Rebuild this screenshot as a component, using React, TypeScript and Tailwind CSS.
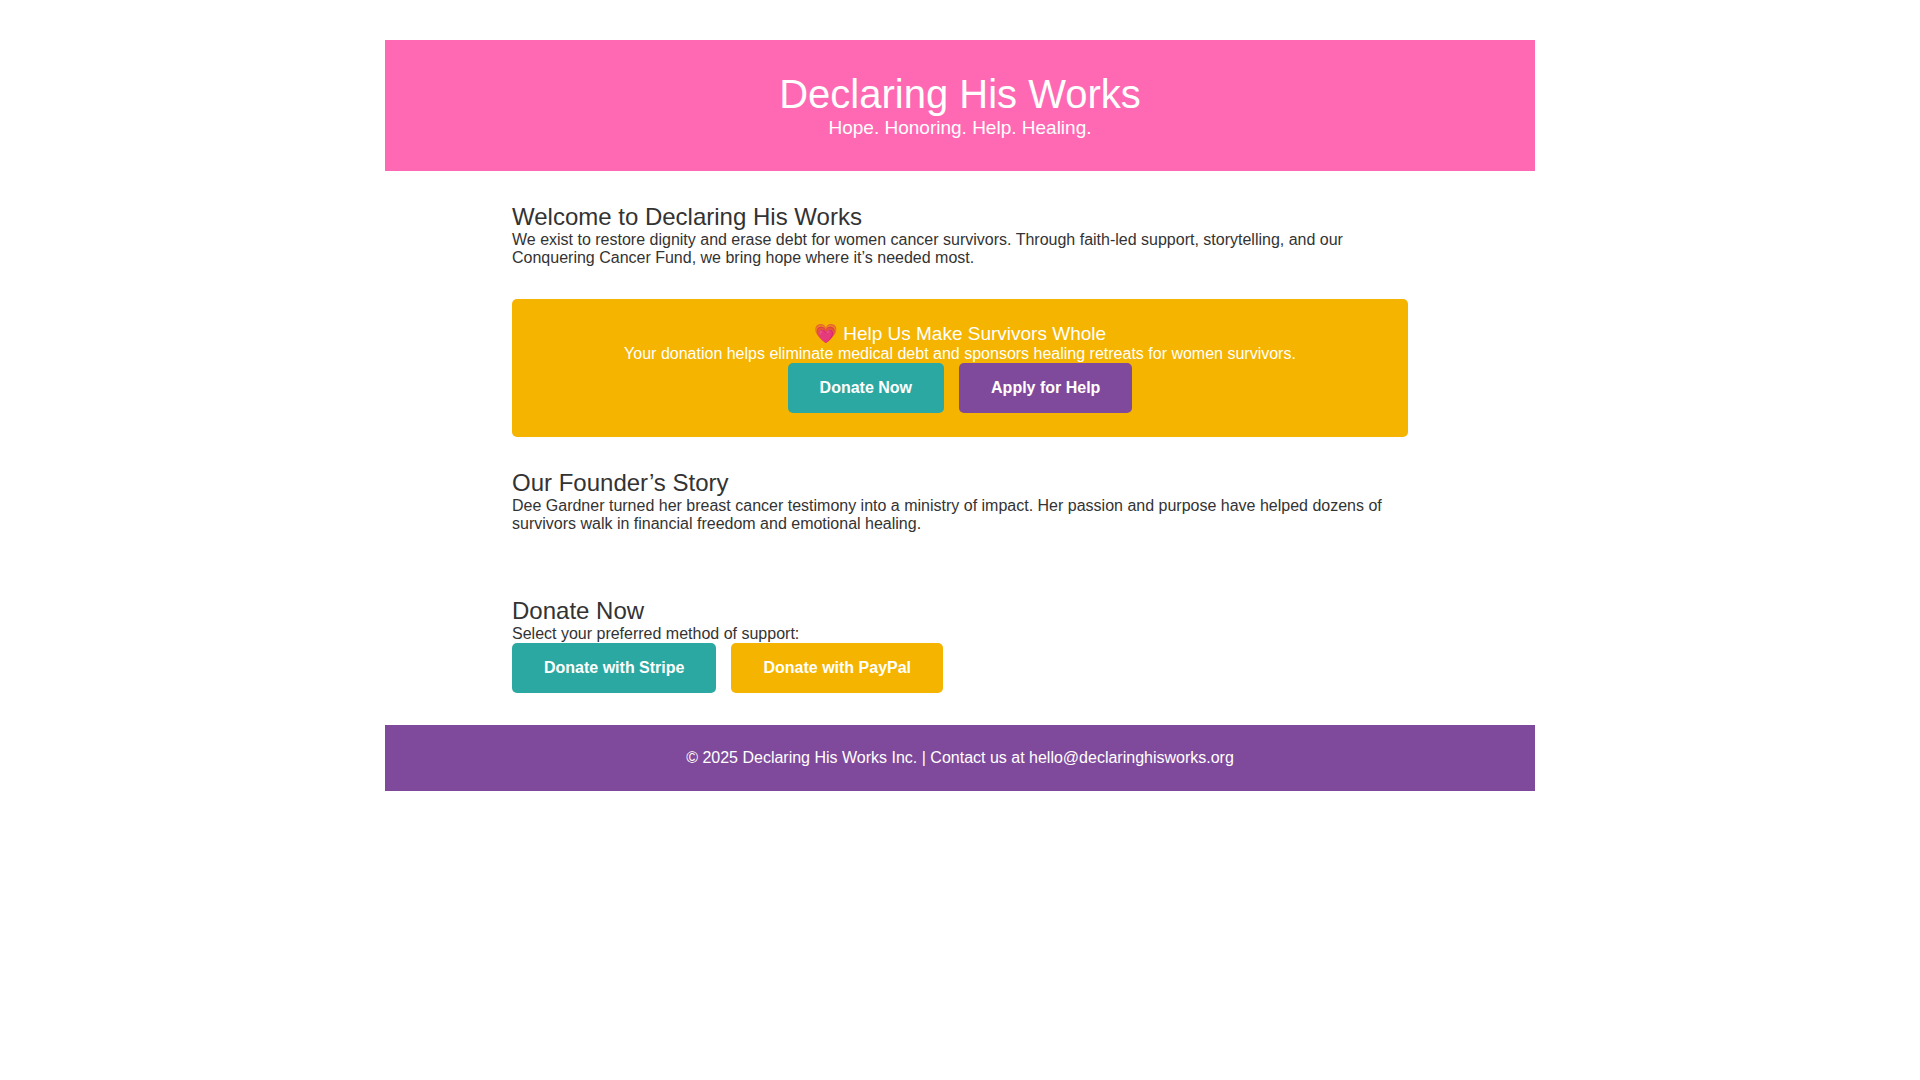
import type { ReactNode } from "react";
import { cva, type VariantProps } from "class-variance-authority";

const button = cva(
  "inline-block rounded-[5px] px-8 py-4 text-[16px] leading-[18px] font-bold text-white transition-opacity hover:opacity-90",
  {
    variants: {
      color: {
        teal: "bg-[#2ca8a2]",
        purple: "bg-[#7f4a9b]",
        gold: "bg-[#f5b400]",
      },
    },
    defaultVariants: { color: "teal" },
  }
);

type ButtonLinkProps = VariantProps<typeof button> & {
  href: string;
  children: ReactNode;
};

function ButtonLink({ href, color, children }: ButtonLinkProps) {
  return (
    <a href={href} className={button({ color })}>
      {children}
    </a>
  );
}

function Section({ id, title, children }: { id?: string; title: string; children: ReactNode }) {
  return (
    <section id={id}>
      <h2 className="text-[24px] leading-[28px]">{title}</h2>
      {children}
    </section>
  );
}

export default function App() {
  return (
    <div className="mx-auto max-w-[1150px] py-10 font-['Liberation_Sans',Arial,sans-serif] text-[16px] leading-[18px] text-[#333333]">
      <header className="bg-[#ff69b4] p-8 text-center text-white">
        <h1 className="text-[40px] leading-[45px]">Declaring His Works</h1>
        <p className="text-[19px] leading-[22px]">Hope. Honoring. Help. Healing.</p>
      </header>

      <main className="mx-auto flex max-w-[960px] flex-col gap-8 p-8">
        <Section title="Welcome to Declaring His Works">
          <p>
            We exist to restore dignity and erase debt for women cancer survivors. Through faith-led
            support, storytelling, and our Conquering Cancer Fund, we bring hope where it’s needed most.
          </p>
        </Section>

        {/* Call to action */}
        <section className="rounded-[5px] bg-[#f5b400] p-6 text-center text-white">
          <h3 className="text-[19px] leading-[22px]">💗 Help Us Make Survivors Whole</h3>
          <p>Your donation helps eliminate medical debt and sponsors healing retreats for women survivors.</p>
          <div className="flex flex-wrap justify-center gap-[15px]">
            <ButtonLink href="#donate">Donate Now</ButtonLink>
            <ButtonLink href="#apply" color="purple">
              Apply for Help
            </ButtonLink>
          </div>
        </section>

        <Section title="Our Founder’s Story">
          <p>
            Dee Gardner turned her breast cancer testimony into a ministry of impact. Her passion and
            purpose have helped dozens of survivors walk in financial freedom and emotional healing.
          </p>
        </Section>

        <div className="pt-8">
          <Section id="donate" title="Donate Now">
            <p>Select your preferred method of support:</p>
            <div className="flex flex-wrap gap-[15px]">
              <ButtonLink href="#stripe">Donate with Stripe</ButtonLink>
              <ButtonLink href="#paypal" color="gold">
                Donate with PayPal
              </ButtonLink>
            </div>
          </Section>
        </div>
      </main>

      <footer className="bg-[#7f4a9b] p-6 text-center text-white">
        <p>© 2025 Declaring His Works Inc. | Contact us at hello@declaringhisworks.org</p>
      </footer>
    </div>
  );
}
